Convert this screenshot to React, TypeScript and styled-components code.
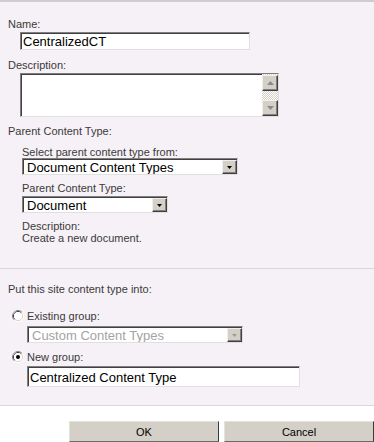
import React from "react";
import styled, { createGlobalStyle } from "styled-components";

const GlobalStyle = createGlobalStyle`
  html, body {
    margin: 0;
    padding: 0;
    background: #ffffff;
  }
  body {
    font-family: "Liberation Sans", Arial, sans-serif;
  }
`;

const Dialog = styled.div`
  width: 374px;
  height: 442px;
  box-sizing: border-box;
  display: flex;
  flex-direction: column;
  overflow: hidden;
  background: #f6f1f6;
  border-top: 2px solid #cfcbcf;
`;

const Section = styled.div<{ $top: number; $bottom: number }>`
  padding: ${(p) => p.$top}px 0 ${(p) => p.$bottom}px 8px;
  border-bottom: 1px solid #d9d5d9;
`;

const Label = styled.div<{ $mt?: number }>`
  margin-top: ${(p) => p.$mt ?? 0}px;
  font-size: 11px;
  line-height: 12px;
  color: #3a3a3a;
  white-space: nowrap;
`;

const Indent = styled.div<{ $left: number }>`
  margin-left: ${(p) => p.$left}px;
`;

const Sunken = styled.div<{ $w: number; $h: number; $mt?: number }>`
  width: ${(p) => p.$w}px;
  height: ${(p) => p.$h}px;
  margin-top: ${(p) => p.$mt ?? 0}px;
  box-sizing: border-box;
  display: flex;
  align-items: stretch;
  background: #ffffff;
  border: 1px solid;
  border-color: #7f7f7f #e2dfe2 #e2dfe2 #7f7f7f;
  box-shadow: inset 1px 1px 0 #404040;
`;

const FieldText = styled.div<{ $select?: boolean; $disabled?: boolean }>`
  flex: 1;
  display: flex;
  align-items: center;
  padding: 1px 0 0 ${(p) => (p.$select ? 4 : 2)}px;
  font-size: 13px;
  color: ${(p) => (p.$disabled ? "#a3a3a3" : "#000000")};
  white-space: nowrap;
  overflow: hidden;
`;

const Raised = styled.div`
  box-sizing: border-box;
  display: flex;
  align-items: center;
  justify-content: center;
  background: #d4d0c8;
  border: 1px solid;
  border-color: #f0efeb #404040 #404040 #f0efeb;
  box-shadow: inset -1px -1px 0 #808080;
`;

const DropButton = styled(Raised)`
  width: 15px;
  margin: 1px 0 0 0;
`;

const ScrollBar = styled.div`
  width: 16px;
  display: flex;
  flex-direction: column;
  padding-top: 1px;
  background: repeating-conic-gradient(#d4d0c8 0 25%, #ffffff 0 50%) 0 0 / 2px 2px;
`;

const ScrollButton = styled(Raised)`
  width: 16px;
  height: 16px;
`;

const ScrollTrack = styled.div`
  flex: 1;
`;

const RadioRow = styled.label<{ $mt: number }>`
  display: flex;
  align-items: center;
  gap: 3px;
  margin: ${(p) => p.$mt}px 0 0 4px;
`;

const Footer = styled.div`
  flex: 1;
  display: flex;
  justify-content: flex-end;
  align-items: flex-start;
  gap: 5px;
  padding-top: 15px;
  background: #ffffff;
`;

const Button = styled.button`
  width: 150px;
  height: 21px;
  padding: 0;
  box-sizing: border-box;
  background: #d4d0c8;
  border: 1px solid;
  border-color: #e4e2dd #3c3c3c #6a6a6a #e4e2dd;
  font-family: "Liberation Sans", Arial, sans-serif;
  font-size: 11px;
  color: #000000;
`;

const Arrow = ({ up, color }: { up?: boolean; color: string }) => (
  <svg width="7" height="4" viewBox="0 0 7 4">
    <polygon points={up ? "3.5,0 7,4 0,4" : "0,0 7,0 3.5,4"} fill={color} />
  </svg>
);

const Select = ({
  value,
  width,
  mt,
  disabled,
}: {
  value: string;
  width: number;
  mt?: number;
  disabled?: boolean;
}) => (
  <Sunken $w={width} $h={17} $mt={mt}>
    <FieldText $select $disabled={disabled}>
      {value}
    </FieldText>
    <DropButton>
      <svg width="5" height="3" viewBox="0 0 5 3">
        <polygon points="0,0 5,0 2.5,3" fill={disabled ? "#9a9a9a" : "#000"} />
      </svg>
    </DropButton>
  </Sunken>
);

const Radio = ({ checked }: { checked?: boolean }) => (
  <svg width="12" height="12" viewBox="0 0 12 12">
    <circle cx="6" cy="6" r="5.5" fill="none" stroke="#ffffff" />
    <path d="M2.11 9.89 A5.5 5.5 0 0 1 9.89 2.11" fill="none" stroke="#808080" />
    <circle cx="6" cy="6" r="4.5" fill="none" stroke="#d4d0c8" />
    <path d="M2.82 9.18 A4.5 4.5 0 0 1 9.18 2.82" fill="none" stroke="#404040" />
    <circle cx="6" cy="6" r="4" fill="#ffffff" />
    {checked && <circle cx="6" cy="6" r="2" fill="#000000" />}
  </svg>
);

export default function App() {
  return (
    <>
      <GlobalStyle />
      <Dialog>
        <Section $top={16} $bottom={24}>
          <Label>Name:</Label>
          <Indent $left={12}>
            <Sunken $w={230} $h={18} $mt={2}>
              <FieldText>CentralizedCT</FieldText>
            </Sunken>
          </Indent>
          <Label $mt={9}>Description:</Label>
          <Indent $left={12}>
            <Sunken $w={259} $h={44} $mt={2}>
              <FieldText />
              <ScrollBar>
                <ScrollButton>
                  <Arrow up color="#8a8a8a" />
                </ScrollButton>
                <ScrollTrack />
                <ScrollButton>
                  <Arrow color="#8a8a8a" />
                </ScrollButton>
              </ScrollBar>
            </Sunken>
          </Indent>
          <Label $mt={8}>Parent Content Type:</Label>
          <Indent $left={14}>
            <Label $mt={9}>Select parent content type from:</Label>
            <Select value="Document Content Types" width={216} />
            <Label $mt={7}>Parent Content Type:</Label>
            <Select value="Document" width={146} mt={2} />
            <Label $mt={7}>Description:</Label>
            <Label>Create a new document.</Label>
          </Indent>
        </Section>
        <Section $top={14} $bottom={18}>
          <Label>Put this site content type into:</Label>
          <RadioRow $mt={15}>
            <Radio />
            <Label>Existing group:</Label>
          </RadioRow>
          <Indent $left={19}>
            <Select value="Custom Content Types" width={216} mt={4} disabled />
          </Indent>
          <RadioRow $mt={8}>
            <Radio checked />
            <Label>New group:</Label>
          </RadioRow>
          <Indent $left={19}>
            <Sunken $w={273} $h={21} $mt={3}>
              <FieldText>Centralized Content Type</FieldText>
            </Sunken>
          </Indent>
        </Section>
        <Footer>
          <Button>OK</Button>
          <Button>Cancel</Button>
        </Footer>
      </Dialog>
    </>
  );
}
